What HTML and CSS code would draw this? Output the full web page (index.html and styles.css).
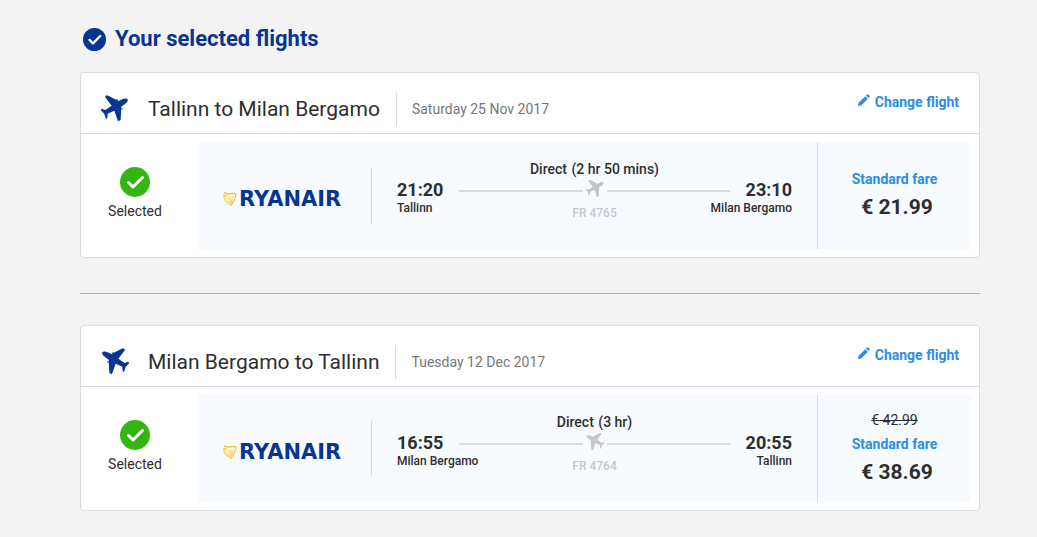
FILE: index.html
```html
<!DOCTYPE html>
<html lang="en">
<head>
<meta charset="utf-8">
<meta name="viewport" content="width=device-width, initial-scale=1">
<title>Your selected flights</title>
<link rel="stylesheet" href="styles.css">
</head>
<body>
<svg class="defs" aria-hidden="true">
  <symbol id="plane" viewBox="15 27 90 90"><path d="M98 43C101 49 92 57 79 65L77 104L71 109L68 106L58 77L38 86L37 100L33 102L28 87L17 75L21 71L31 75L50 62L30 36L34 31L40 32L71 48C82 41 95 38 98 43Z"/></symbol>
  <symbol id="tick" viewBox="0 0 30 30"><circle cx="15" cy="15" r="15"/><path d="M8.500 15.500L13 20L22.500 10.500" fill="none" stroke="#fff" stroke-width="3" stroke-linecap="round" stroke-linejoin="round"/></symbol>
  <symbol id="pencil" viewBox="0 0 12 12"><path d="M0 12L.6 8.800L7.300 2.200L9.900 4.800L3.200 11.400ZM8 1.500L9.200.4Q9.800 0 10.400.5L11.600 1.700Q12 2.200 11.600 2.800L10.500 4Z"/></symbol>
  <symbol id="harp" viewBox="0 0 39 39"><g fill="none" stroke="#f1c933"><path d="M3 5Q7 1 10 4Q12 8 16 6Q27 2 38 6" stroke-width="4"/><path d="M2 10H9M3 7Q1 17 7 25Q13 31 22 37Q33 24 37 7" stroke-width="3"/><path d="M9 10Q8 20 21 33M15 12L22 30M22 12L23 30M29 11L24 30" stroke-width="2"/></g></symbol>
</svg>
<main class="page">
  <h1 class="title"><svg class="title-icon"><use href="#tick"/></svg>Your selected flights</h1>

  <section class="card">
    <header class="card-head">
      <svg class="route-icon"><circle class="engine" cx="17" cy="6" r="1"/><circle class="engine" cx="22" cy="15" r="1"/><use href="#plane"/></svg>
      <h2 class="route">Tallinn to Milan Bergamo</h2>
      <span class="date">Saturday 25 Nov 2017</span>
      <a class="change" href="#change-outbound"><svg class="pencil"><use href="#pencil"/></svg>Change flight</a>
    </header>
    <div class="card-body">
      <div class="status"><svg class="status-icon"><use href="#tick"/></svg>Selected</div>
      <div class="panel">
        <div class="carrier"><svg class="harp"><use href="#harp"/></svg><span>RYANAIR</span></div>
        <div class="trip">
          <div class="stop"><b class="time">21:20</b><span class="city">Tallinn</span></div>
          <div class="leg">
            <div class="duration">Direct <span>(2 hr 50 mins)</span></div>
            <div class="track"><svg class="track-icon"><use href="#plane"/></svg></div>
            <div class="number">FR 4765</div>
          </div>
          <div class="stop stop-end"><b class="time">23:10</b><span class="city">Milan Bergamo</span></div>
        </div>
        <div class="fare"><span class="fare-name">Standard fare</span><b class="price">€ 21.99</b></div>
      </div>
    </div>
  </section>

  <hr class="divider">

  <section class="card">
    <header class="card-head">
      <svg class="route-icon mirrored"><circle class="engine" cx="17" cy="6" r="1"/><circle class="engine" cx="22" cy="15" r="1"/><use href="#plane"/></svg>
      <h2 class="route">Milan Bergamo to Tallinn</h2>
      <span class="date">Tuesday 12 Dec 2017</span>
      <a class="change" href="#change-return"><svg class="pencil"><use href="#pencil"/></svg>Change flight</a>
    </header>
    <div class="card-body">
      <div class="status"><svg class="status-icon"><use href="#tick"/></svg>Selected</div>
      <div class="panel">
        <div class="carrier"><svg class="harp"><use href="#harp"/></svg><span>RYANAIR</span></div>
        <div class="trip">
          <div class="stop"><b class="time">16:55</b><span class="city">Milan Bergamo</span></div>
          <div class="leg">
            <div class="duration">Direct <span>(3 hr)</span></div>
            <div class="track"><svg class="track-icon mirrored"><use href="#plane"/></svg></div>
            <div class="number">FR 4764</div>
          </div>
          <div class="stop stop-end"><b class="time">20:55</b><span class="city">Tallinn</span></div>
        </div>
        <div class="fare"><s class="old-price">€ 42.99</s><span class="fare-name">Standard fare</span><b class="price">€ 38.69</b></div>
      </div>
    </div>
  </section>
</main>
</body>
</html>
```

FILE: styles.css
```css
* { box-sizing: border-box; }
body {
  margin: 0;
  background: #f3f3f3;
  color: #2e2e2e;
  font-family: Roboto, "Liberation Sans", sans-serif;
  font-size: 14px;
  line-height: 20px;
}
svg { display: block; flex: none; }
.defs { position: absolute; width: 0; height: 0; }
.page { padding: 25px 57px 24px 80px; }
.title {
  display: flex;
  align-items: center;
  gap: 9px;
  margin: 0 0 19px;
  padding-left: 3px;
  color: #073590;
  font-size: 22px;
  font-weight: 700;
  line-height: 28px;
}
.title-icon { width: 23px; height: 23px; fill: #073590; }
.card {
  background: #fff;
  border: 1px solid #d8dbe2;
  border-radius: 4px;
}
.card-head {
  display: flex;
  align-items: center;
  height: 61px;
  padding: 11px 20px 0 19px;
  border-bottom: 1px solid #d8dbe2;
}
.route-icon { width: 30px; height: 30px; fill: #073590; }
.engine { fill: #2f9bf0; }
.mirrored { transform: scaleX(-1); }
.route {
  margin: 0 16px 0 18px;
  font-size: 21px;
  font-weight: 400;
  line-height: 28px;
}
.date {
  padding: 7px 0 7px 15px;
  border-left: 1px solid #d8dbe2;
  color: #777;
}
.change {
  display: flex;
  align-items: center;
  align-self: flex-start;
  gap: 5px;
  margin: 8px 0 0 auto;
  color: #2b8ee6;
  font-weight: 700;
  text-decoration: none;
}
.pencil { width: 12px; height: 12px; margin-bottom: 5px; fill: #2b8ee6; }
.card-body { display: flex; padding: 8px; }
.status {
  display: flex;
  flex-direction: column;
  align-items: center;
  gap: 4px;
  width: 109px;
  padding: 25px 17px 0 0;
}
.status-icon { width: 30px; height: 30px; fill: #35b512; }
.panel {
  display: flex;
  flex: 1;
  align-items: center;
  min-height: 107px;
  background: #f7fbff;
  border-radius: 3px;
}
.carrier {
  display: flex;
  align-items: center;
  gap: 2px;
  width: 174px;
  height: 56px;
  padding: 6px 0 0 25px;
  border-right: 1px solid #d8dbe2;
  color: #073590;
  font-family: "DejaVu Sans", sans-serif;
  font-size: 21px;
  font-weight: 700;
}
.harp { width: 14px; height: 14px; }
.trip {
  display: grid;
  flex: 1;
  grid-template-columns: 62px 1fr 62px;
  align-items: start;
  padding: 0 25px 10px 25px;
}
.stop { display: flex; flex-direction: column; padding-top: 21px; white-space: nowrap; }
.stop-end { align-items: flex-end; }
.time { font-size: 18px; line-height: 20px; font-weight: 700; }
.city { font-size: 12px; line-height: 16px; font-weight: 500; }
.leg { text-align: center; font-weight: 500; }
.duration span { margin-left: 1px; }
.track { display: flex; align-items: center; gap: 2px; height: 24px; }
.track::before, .track::after { content: ""; flex: 1; height: 2px; background: #d8dbde; }
.track-icon { width: 20px; height: 20px; margin-top: -3px; fill: #c3c7cb; }
.number { color: #c3c7cb; font-size: 12px; line-height: 20px; }
.fare {
  display: flex;
  flex-direction: column;
  align-items: center;
  justify-content: center;
  align-self: stretch;
  width: 154px;
  padding-bottom: 5px;
  border-left: 1px solid #d8dbe2;
}
.old-price { line-height: 20px; font-weight: 400; }
.fare-name { color: #2b8ee6; font-weight: 700; line-height: 28px; }
.price { padding-left: 5px; font-size: 21px; line-height: 28px; }
.old-price ~ .price { margin-bottom: -4px; }
.divider { height: 1px; margin: 35px 0 31px; border: 0; background: #b4b4b4; }
```
